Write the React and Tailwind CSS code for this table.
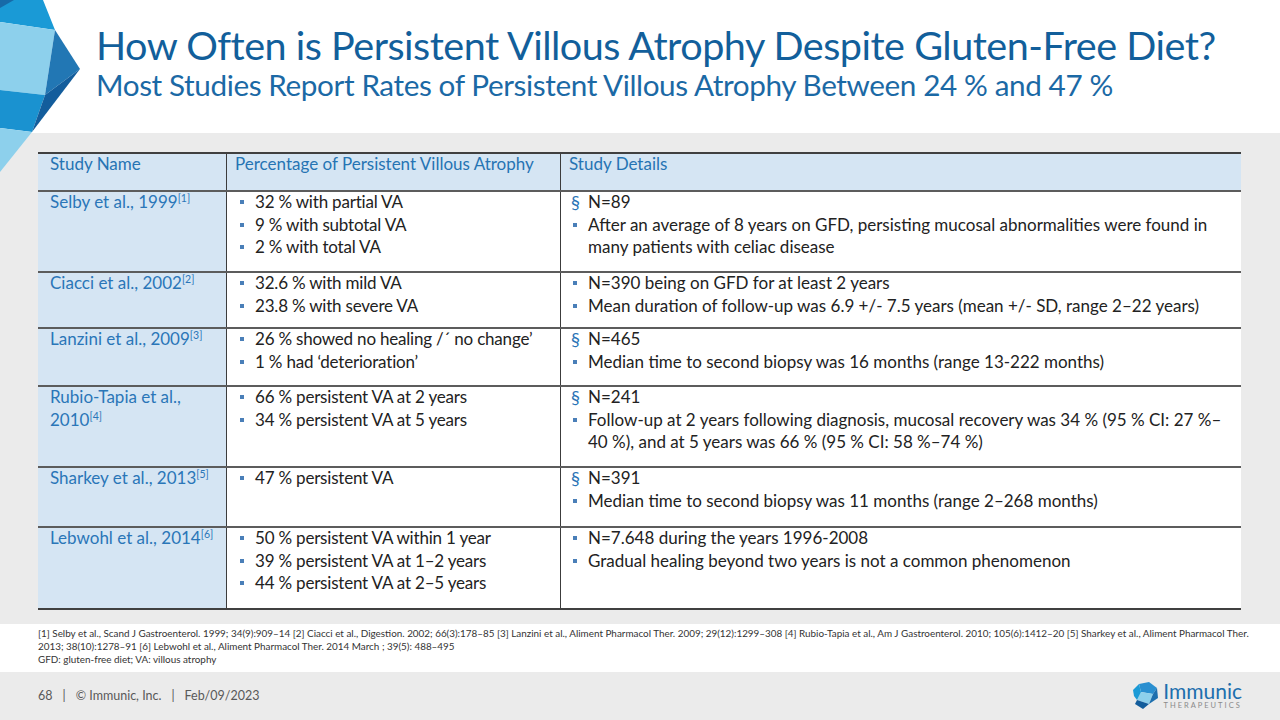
import React from 'react';

const FONT = { fontFamily: 'Lato, "Open Sans", sans-serif' };

const rows = [
  {
    name: 'Selby et al., 1999',
    ref: '[1]',
    h: 'h-[81px]',
    pct: ['32 % with partial VA', '9 % with subtotal VA', '2 % with total VA'],
    details: [
      { m: '§', t: 'N=89' },
      {
        m: 'sq',
        t: (
          <>
            After an average of 8 years on GFD, persisting mucosal abnormalities were found in
            <br />
            many patients with celiac disease
          </>
        ),
      },
    ],
  },
  {
    name: 'Ciacci et al., 2002',
    ref: '[2]',
    h: 'h-[56px]',
    pct: ['32.6 % with mild VA', '23.8 % with severe VA'],
    details: [
      { m: 'sq', t: 'N=390 being on GFD for at least 2 years' },
      { m: 'sq', t: 'Mean duration of follow-up was 6.9 +/- 7.5 years (mean +/- SD, range 2–22 years)' },
    ],
  },
  {
    name: 'Lanzini et al., 2009',
    ref: '[3]',
    h: 'h-[58px]',
    pct: ['26 % showed no healing /´ no change’', '1 % had ‘deterioration’'],
    details: [
      { m: '§', t: 'N=465' },
      { m: 'sq', t: 'Median time to second biopsy was 16 months (range 13-222 months)' },
    ],
  },
  {
    name: (
      <>
        Rubio-Tapia et al.,
        <br />
        2010
      </>
    ),
    ref: '[4]',
    h: 'h-[81px]',
    pct: ['66 % persistent VA at 2 years', '34 % persistent VA at 5 years'],
    details: [
      { m: '§', t: 'N=241' },
      {
        m: 'sq',
        t: (
          <>
            Follow-up at 2 years following diagnosis, mucosal recovery was 34 % (95 % CI: 27 %–
            <br />
            40 %), and at 5 years was 66 % (95 % CI: 58 %–74 %)
          </>
        ),
      },
    ],
  },
  {
    name: 'Sharkey et al., 2013',
    ref: '[5]',
    h: 'h-[60px]',
    pct: ['47 % persistent VA'],
    details: [
      { m: '§', t: 'N=391' },
      { m: 'sq', t: 'Median time to second biopsy was 11 months (range 2–268 months)' },
    ],
  },
  {
    name: 'Lebwohl et al., 2014',
    ref: '[6]',
    h: 'h-[82px]',
    pct: ['50 % persistent VA within 1 year', '39 % persistent VA at 1–2 years', '44 % persistent VA at 2–5 years'],
    details: [
      { m: 'sq', t: 'N=7.648 during the years 1996-2008' },
      { m: 'sq', t: 'Gradual healing beyond two years is not a common phenomenon' },
    ],
  },
];

function Marker({ m }) {
  if (m === '§')
    return (
      <span className="w-[17px] shrink-0 text-[#2a74b6] text-[18px] leading-[22.5px]">§</span>
    );
  return (
    <span className="w-[17px] shrink-0 h-[22.5px] flex items-center">
      <span className="w-[4px] h-[4px] ml-[2px] bg-[#4a7fb8]" />
    </span>
  );
}

function Item({ m, children }) {
  return (
    <div className="flex">
      <Marker m={m} />
      <span>{children}</span>
    </div>
  );
}

function Logo() {
  return (
    <svg className="absolute left-0 top-0" width="82" height="172" viewBox="0 0 82 172">
      <polygon points="0,0 43,0 55,30 0,22" fill="#1a9ad6" />
      <polygon points="0,0 14,0 0,8" fill="#176aa8" />
      <polygon points="0,22 55,30 45,95 0,90" fill="#8dd0ec" />
      <polygon points="55,30 80,69 45,95" fill="#2277b4" />
      <polygon points="0,90 45,95 32,132 0,128" fill="#1a92d0" />
      <polygon points="80,69 32,132 45,95" fill="#135d9c" />
      <polygon points="0,128 32,132 0,172" fill="#8dd0ec" />
    </svg>
  );
}

function BrandMark() {
  return (
    <svg width="26" height="28" viewBox="0 0 26 28">
      <polygon points="6,2 16,0 24,6 20,12 8,10" fill="#2a8fd0" />
      <polygon points="8,10 20,12 16,22 4,18" fill="#8dd0ec" />
      <polygon points="20,12 24,6 25,16 16,22" fill="#1d6fae" />
      <polygon points="4,18 16,22 10,27 2,22" fill="#135d9c" />
      <polygon points="0,8 6,2 8,10 4,18 1,14" fill="#1a9ad6" />
    </svg>
  );
}

export default function App() {
  return (
    <div className="w-[1280px] h-[720px] bg-white flex flex-col relative overflow-hidden" style={FONT}>
      {/* title */}
      <div className="h-[133px] shrink-0 pl-[96px] pt-[22px] text-[#125f9b]">
        <div className="text-[39.6px] leading-[45px] tracking-[-0.5px] whitespace-nowrap">
          How Often is Persistent Villous Atrophy Despite Gluten-Free Diet?
        </div>
        <div className="text-[29.7px] leading-[35px] tracking-[-0.4px] whitespace-nowrap text-[#1b69a5]">
          Most Studies Report Rates of Persistent Villous Atrophy Between 24 % and 47 %
        </div>
      </div>

      {/* table band */}
      <div className="h-[491px] shrink-0 bg-[#ebebeb] pt-[19px] pl-[38px]">
        <div className="w-[1203px] border-t-2 border-b-2 border-[#404040] text-[17px] leading-[22.5px]">
          <div className="grid grid-cols-[188px_334px_681px] h-[36px] bg-[#d5e5f3] text-[#2674b3]">
            <div className="pl-[12px] -mt-[1px]">Study Name</div>
            <div className="pl-[8px] border-l border-[#3c3c3c]">
              <div className="-mt-[1px]">Percentage of Persistent Villous Atrophy</div>
            </div>
            <div className="pl-[8px] border-l border-[#3c3c3c]">
              <div className="-mt-[1px]">Study Details</div>
            </div>
          </div>
          {rows.map((r, i) => (
            <div key={i} className={`grid grid-cols-[188px_334px_681px] border-t-2 border-[#5c5c5c] ${r.h}`}>
              <div className="bg-[#d5e5f3] text-[#2a76b8] pl-[12px]">
                <div className="-mt-[1px]">
                  {r.name}
                  <sup className="text-[10.5px] relative -top-[6px]">{r.ref}</sup>
                </div>
              </div>
              <div className="bg-white border-l border-[#3c3c3c] pl-[11px] text-[#222] tracking-[-0.2px]">
                <div className="-mt-[1px]">
                  {r.pct.map((p, j) => (
                    <Item key={j} m="sq">
                      {p}
                    </Item>
                  ))}
                </div>
              </div>
              <div className="bg-white border-l border-[#3c3c3c] pl-[10px] text-[#222]">
                <div className="-mt-[1px]">
                  {r.details.map((d, j) => (
                    <Item key={j} m={d.m}>
                      {d.t}
                    </Item>
                  ))}
                </div>
              </div>
            </div>
          ))}
        </div>
      </div>

      {/* footnotes */}
      <div className="h-[48px] shrink-0 pl-[38px] pt-[3px] text-[9.9px] leading-[13px] text-[#333] whitespace-nowrap">
        <div>
          [1] Selby et al., Scand J Gastroenterol. 1999; 34(9):909–14 [2] Ciacci et al., Digestion. 2002; 66(3):178–85 [3] Lanzini et al., Aliment Pharmacol Ther. 2009; 29(12):1299–308 [4] Rubio-Tapia et al., Am J Gastroenterol. 2010; 105(6):1412–20 [5] Sharkey et al., Aliment Pharmacol Ther.
        </div>
        <div>2013; 38(10):1278–91 [6] Lebwohl et al., Aliment Pharmacol Ther. 2014 March ; 39(5): 488–495</div>
        <div>GFD: gluten-free diet; VA: villous atrophy</div>
      </div>

      {/* footer */}
      <div className="flex-1 bg-[#ebebeb] flex items-center justify-between pl-[38px] pr-[38px]">
        <div className="text-[12.5px] text-[#595959] flex gap-[10px]">
          <span>68</span>
          <span>|</span>
          <span>© Immunic, Inc.</span>
          <span>|</span>
          <span>Feb/09/2023</span>
        </div>
        <div className="flex items-center gap-[4px]">
          <BrandMark />
          <div className="flex flex-col items-center">
            <span className="text-[21px] leading-[20px] text-[#1d6fae]">Immunic</span>
            <span className="text-[7.5px] leading-[10px] tracking-[2px] text-[#8a8a8a]">THERAPEUTICS</span>
          </div>
        </div>
      </div>

      <Logo />
    </div>
  );
}
